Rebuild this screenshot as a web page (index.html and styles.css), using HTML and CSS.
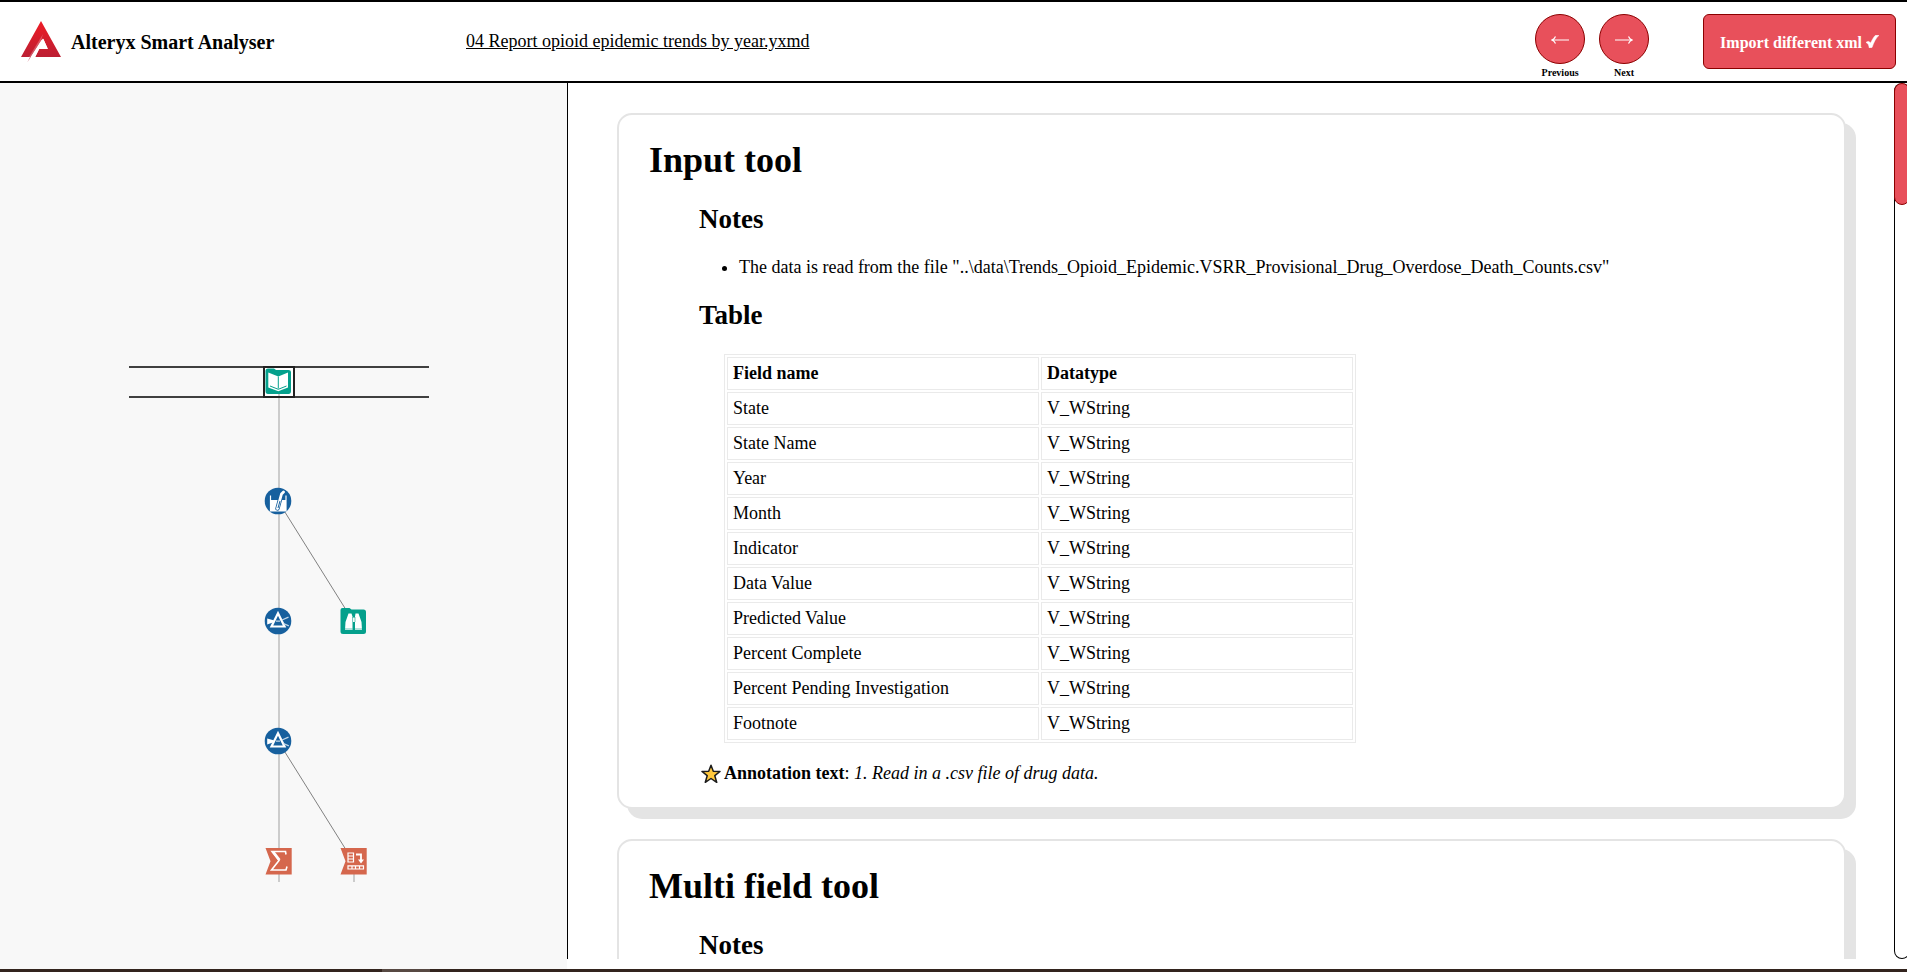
FILE: index.html
```html
<!DOCTYPE html>
<html lang="en">
<head>
<meta charset="utf-8">
<title>Alteryx Smart Analyser</title>
<link rel="stylesheet" href="styles.css">
</head>
<body>
<header class="topbar">
  <div class="brand">
    <svg class="logo" viewBox="0 0 40 42" aria-hidden="true">
      <defs>
        <linearGradient id="red" x1="0" y1="0" x2="0" y2="1">
          <stop offset="0" stop-color="#ee1c25"/>
          <stop offset="1" stop-color="#b51f35"/>
        </linearGradient>
      </defs>
      <path d="M20 0 40 36H14L18 28H27L22 17.500 6.500 41 9 36H0Z" fill="url(#red)"/>
      <path d="M22 13 8 36 6.500 41 10 36 20 20Z" fill="#fff" opacity=".25"/>
      <path d="M20.500 19 9.500 36.500H14L18.500 27.500H26.500L22.500 18Z" fill="#fff"/>
    </svg>
    <span class="brand-name">Alteryx Smart Analyser</span>
  </div>
  <a class="file" href="#file">04 Report opioid epidemic trends by year.yxmd</a>
  <nav class="actions">
    <div class="step">
      <button class="round" id="prev" aria-labelledby="prev-label"><svg class="arrow" viewBox="0 0 18 10" aria-hidden="true"><path d="M.8 5H18M4.500 1.500Q3.500 4 .8 5 3.500 6 4.500 8.500"/></svg></button>
      <label class="step-label" id="prev-label" for="prev">Previous</label>
    </div>
    <div class="step">
      <button class="round" id="next" aria-labelledby="next-label"><svg class="arrow" viewBox="0 0 18 10" aria-hidden="true"><path d="M0 5H17.200M13.500 1.500Q14.500 4 17.200 5 14.500 6 13.500 8.500"/></svg></button>
      <label class="step-label" id="next-label" for="next">Next</label>
    </div>
    <button class="import">Import different xml <svg class="tick" viewBox="0 0 13 13" aria-hidden="true"><path d="M0 7.500C1.500 5.800 3.500 6.200 4.600 8 6 5 8 1.500 9.500 .3H13C9.500 3.500 7.800 7.500 6 12.500L3.300 13C2.800 10 2 8 0 7.500Z" fill="#fff" stroke="#fff" stroke-width=".5"/></svg></button>
  </nav>
</header>

<main class="workspace">
  <section class="tree" aria-label="Workflow">
    <svg class="graph" viewBox="124 360 320 530">
      <defs>
        <g id="prism">
          <circle cx="13" cy="13" r="13.300" fill="#17609e"/>
          <path d="M2.200 10.600 8.500 12.300V14.200L2.200 16.600Z" fill="#fff"/>
          <path d="M13 5.200 19.500 18.500H6.500Z" fill="none" stroke="#fff" stroke-width="2.200"/>
          <path d="M11 13.200H15M17 12 23.500 9.200M18.500 15.500 23.800 17.800" stroke="#c5d8e8" stroke-width="1.300"/>
        </g>
      </defs>
      <path d="M129 368H429M129 398H429" stroke="#404040" stroke-width="2"/>
      <rect x="264" y="368" width="30" height="30" fill="#fff"/>
      <path d="M279 384V883M354 870V883" stroke="#ccc" stroke-width="2"/>
      <path d="M278 502 353 622M278 742 353 862" stroke="#808080" stroke-width="1"/>
      <rect x="264" y="368" width="30" height="30" fill="none" stroke="#222" stroke-width="2"/>

      <g transform="translate(265 369)">
        <path d="M3 .5H9L11 2H23.500Q26 2 26 4V23Q26 26 23.500 26H3Q.5 26 .5 23V3Q.5 .5 3 .5Z" fill="#04a08c"/>
        <path d="M3.300 4.500 13.300 8.500 23 4.500V19.500L13.300 23.300 3.300 19.500Z" fill="#fff"/>
        <path d="M13.300 8.500V20.500M5 18 13.300 21.300 21.500 18" fill="none" stroke="#04a08c" stroke-width="1"/>
      </g>

      <g transform="translate(265 489)">
        <circle cx="13" cy="13" r="13.300" fill="#17609e"/>
        <path d="M5.500 7.500V23H21V7.500" fill="none" stroke="#fff" stroke-width="1.200"/>
        <path d="M5.500 12H21V23H5.500Z" fill="#fff"/>
        <path d="M18.500 4 16.500 6 12.500 20.500" fill="none" stroke="#17609e" stroke-width="4.400" stroke-linecap="round"/>
        <path d="M18.500 4 16.500 6 12.500 20.500" fill="none" stroke="#fff" stroke-width="2.800" stroke-linecap="round"/>
        <path d="M15 13 13 20" stroke="#17609e" stroke-width="1"/>
      </g>

      <use href="#prism" x="265" y="609"/>
      <use href="#prism" x="265" y="729"/>

      <g transform="translate(340 609)">
        <path d="M2.500 0H9.500L11.500 1.500H23.500Q26 1.500 26 4V23.500Q26 26 23.500 26H3Q.5 26 .5 23.500V2Q.5 0 2.500 0Z" fill="#04a08c"/>
        <path d="M8.500 5.500H11.500L12.500 8.500V22H5L5.500 14ZM15.500 5.500H18.500L21.500 14 22 22H15V8.500Z" fill="#fff"/>
        <path d="M12 9.500H16V14H12Z" fill="#fff"/>
        <path d="M5 21H12.500M15 21H22M12.600 9V14M15 9V14" stroke="#04a08c" stroke-width=".6"/>
      </g>

      <g transform="translate(265 849)">
        <path d="M.5 0H26.700V26.500H.5L5.500 13.200Z" fill="#d5674d"/>
        <path d="M21 6.500 20.500 3.500H7L14 12.500 6.500 22H21L22 18.500" fill="none" stroke="#fff" stroke-width="1.600"/>
        <path d="M8 3.500 14.500 12" stroke="#fff" stroke-width="2.500"/>
      </g>

      <g transform="translate(340 849)">
        <path d="M.5 0H26.700V26.500H.5L5.500 13.200Z" fill="#d5674d"/>
        <path d="M8 5H13.500V14H8ZM8 8H13.500M8 11H13.500M8 17.800H23.500V21H8ZM12 17.800V21M15.500 17.800V21M19.500 17.800V21" fill="none" stroke="#fff" stroke-width="1.200"/>
        <path d="M16 6.500H21V12" fill="none" stroke="#fff" stroke-width="1.800"/>
        <path d="M18 11.500H24L21 15.500Z" fill="#fff"/>
      </g>
    </svg>
  </section>

  <section class="details" aria-label="Tool details">
    <div class="cards">
      <article class="card">
        <h1>Input tool</h1>
        <div class="card-body">
          <h2>Notes</h2>
          <ul>
            <li>The data is read from the file "..\data\Trends_Opioid_Epidemic.VSRR_Provisional_Drug_Overdose_Death_Counts.csv"</li>
          </ul>
          <h2>Table</h2>
          <table>
            <thead><tr><th>Field name</th><th>Datatype</th></tr></thead>
            <tbody>
              <tr><td>State</td><td>V_WString</td></tr>
              <tr><td>State Name</td><td>V_WString</td></tr>
              <tr><td>Year</td><td>V_WString</td></tr>
              <tr><td>Month</td><td>V_WString</td></tr>
              <tr><td>Indicator</td><td>V_WString</td></tr>
              <tr><td>Data Value</td><td>V_WString</td></tr>
              <tr><td>Predicted Value</td><td>V_WString</td></tr>
              <tr><td>Percent Complete</td><td>V_WString</td></tr>
              <tr><td>Percent Pending Investigation</td><td>V_WString</td></tr>
              <tr><td>Footnote</td><td>V_WString</td></tr>
            </tbody>
          </table>
          <div class="annotation">
            <svg class="star" viewBox="0 0 20 20" aria-hidden="true"><path d="M10 1.200 12.300 7.300 19 7.500 13.800 11.700 15.700 18.300 10 14.500 4.300 18.300 6.200 11.700 1 7.500 7.700 7.300Z" fill="#ffc83d" stroke="#1c1c1c" stroke-width="1.500" stroke-linejoin="round"/></svg>
            <p><b>Annotation text</b>: <i>1. Read in a .csv file of drug data.</i></p>
          </div>
        </div>
      </article>
      <article class="card">
        <h1>Multi field tool</h1>
        <div class="card-body">
          <h2>Notes</h2>
        </div>
      </article>
    </div>
    <div class="scrollbar" aria-hidden="true"><div class="track"><div class="thumb"></div></div></div>
  </section>
</main>
<div class="edge"><div class="edge-tab"></div></div>
</body>
</html>
```
FILE: styles.css
```css
* { box-sizing: border-box; }

body {
  margin: 0;
  height: 100vh;
  display: flex;
  flex-direction: column;
  overflow: hidden;
  background: #fff;
  color: #000;
  font: 18px "Liberation Serif", "Times New Roman", serif;
}

.topbar {
  flex: none;
  height: 83px;
  display: flex;
  align-items: flex-start;
  border-top: 2px solid #000;
  border-bottom: 2px solid #000;
  padding: 0 11px 0 21px;
}

.brand {
  display: flex;
  align-items: center;
  gap: 10px;
  height: 80px;
  width: 445px;
}

.logo { width: 40px; height: 42px; }
.brand-name { font-size: 20px; font-weight: bold; }

.file {
  color: #000;
  line-height: 78px;
}

.actions {
  margin-left: auto;
  display: flex;
  align-items: flex-start;
  gap: 14px;
  padding-top: 12px;
}

.step {
  width: 50px;
  display: flex;
  flex-direction: column;
  align-items: center;
  gap: 3px;
}

.step-label { font-size: 10px; font-weight: bold; line-height: 12px; }

.round, .import {
  background: #e8505b;
  border: 1px solid #8b0000;
  color: #fff;
  font-family: inherit;
  cursor: pointer;
}

.round {
  display: grid;
  place-items: center;
  width: 50px;
  height: 50px;
  padding: 2px 0 0;
  border-radius: 50%;
}

.arrow {
  width: 18px;
  height: 10px;
  fill: none;
  stroke: #fff;
  stroke-width: 1.2px;
}

.import {
  height: 55px;
  margin-left: 40px;
  padding: 2px 16px 0;
  border-radius: 6px;
  font-size: 16px;
  font-weight: bold;
}

.tick { width: 13px; height: 13px; }

.workspace {
  flex: 1;
  min-height: 0;
  display: flex;
}

.tree {
  width: 29.73%;
  padding: 276px 0 0 124px;
  background: #f8f8f8;
}

.graph { display: block; width: 320px; height: 530px; }

.details {
  flex: 1;
  min-width: 0;
  margin-bottom: 10px;
  display: flex;
  border-left: 1px solid #000;
}

.cards {
  flex: 1;
  min-width: 0;
  overflow: hidden;
  padding: 30px 48px 30px 49px;
  display: flex;
  flex-direction: column;
  gap: 30px;
}

.card {
  flex: none;
  padding: 24px 30px 23px;
  background: #fff;
  border: 2px solid #e4e4e4;
  border-radius: 15px;
  box-shadow: 10px 10px 0 #e4e4e4;
}

h1 { margin: 0 0 23px; font-size: 36px; line-height: 42px; }
h2 { margin: 0 0 22px; font-size: 27px; line-height: 31px; }
.card-body { padding-left: 50px; }
ul { margin: 0 0 22px; padding-left: 40px; line-height: 21px; }

table {
  margin: 23px 0 0 25px;
  border: 1px solid #eaeaea;
  border-spacing: 2px;
}

th, td {
  width: 312px;
  height: 33px;
  padding: 5px;
  border: 1px solid #eaeaea;
  text-align: left;
  line-height: 21px;
}

.annotation {
  display: flex;
  align-items: center;
  gap: 3px;
  margin-top: 20px;
  padding-left: 2px;
}

.annotation p { margin: 0; line-height: 21px; }
.star { width: 20px; height: 20px; }

.scrollbar { width: 13px; overflow: hidden; }

.track {
  width: 16px;
  height: 100%;
  border: 1px solid #000;
  border-top: 0;
  border-radius: 10px;
}

.thumb {
  width: 16px;
  height: 122px;
  margin-left: -1px;
  background: #e8505b;
  border: 1px solid #8b0000;
  border-radius: 8px;
}

.edge { flex: none; height: 3px; background: #33241e; }
.edge-tab { width: 48px; height: 3px; margin-left: 382px; background: #574943; }
```
